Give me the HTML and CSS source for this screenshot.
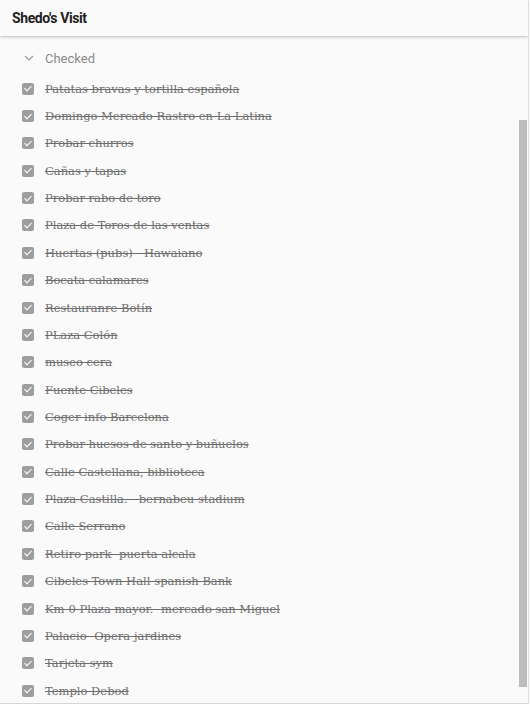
FILE: index.html
```html
<!DOCTYPE html>
<html lang="en">
<head>
    <meta name="viewport" content="width=device-width, initial-scale=1">
    <link rel="stylesheet" href="styles.css">
</head>
<body>

<div class="app">
    <div class="header">
        <h2>Shedo's Visit</h2>
    </div>

    <div class="list-wrap">
        <div class="group-title">
            <svg class="chevron" width="10" height="6" viewBox="0 0 10 6"><path d="M1 1 L5 5 L9 1" fill="none" stroke="#9e9e9e" stroke-width="1.2"/></svg>
            <span>Checked</span>
        </div>

        <ul class="items">
            <li><span class="box"></span>Patatas bravas y tortilla española</li>
            <li><span class="box"></span>Domingo Mercado Rastro en La Latina</li>
            <li><span class="box"></span>Probar churros</li>
            <li><span class="box"></span>Cañas y tapas</li>
            <li><span class="box"></span>Probar rabo de toro</li>
            <li><span class="box"></span>Plaza de Toros de las ventas</li>
            <li><span class="box"></span>Huertas (pubs) - Hawaiano</li>
            <li><span class="box"></span>Bocata calamares</li>
            <li><span class="box"></span>Restauranre Botín</li>
            <li><span class="box"></span>PLaza Colón</li>
            <li><span class="box"></span>museo cera</li>
            <li><span class="box"></span>Fuente Cibeles</li>
            <li><span class="box"></span>Coger info Barcelona</li>
            <li><span class="box"></span>Probar huesos de santo y buñuelos</li>
            <li><span class="box"></span>Calle Castellana, biblioteca</li>
            <li><span class="box"></span>Plaza Castilla. - bernabeu stadium</li>
            <li><span class="box"></span>Calle Serrano</li>
            <li><span class="box"></span>Retiro park -puerta alcala</li>
            <li><span class="box"></span>Cibeles-Town Hall-spanish Bank</li>
            <li><span class="box"></span>Km-0-Plaza mayor. -mercado san Miguel</li>
            <li><span class="box"></span>Palacio -Opera-jardines</li>
            <li><span class="box"></span>Tarjeta sym</li>
            <li><span class="box"></span>Templo Debod</li>
        </ul>

        <!-- scrollbar thumb -->
        <div class="scroll-thumb"></div>
    </div>
</div>

</body>
</html>
```

FILE: styles.css
```css
body {
    margin: 0;
    background-color: #ffffff;
    font-family: 'Roboto', sans-serif;
    color: #333;
}

.app {
    width: 528px;
    height: 703px;
    background-color: #fafafa;
    border-right: 1px solid #dedede;
    border-bottom: 1px solid #d6d6d6;
    box-shadow: 0 2px 2px rgba(0, 0, 0, 0.08);
    display: flex;
    flex-direction: column;
    overflow: hidden;
}

/* Header */
.header {
    height: 36px;
    flex-shrink: 0;
    display: flex;
    align-items: center;
    padding: 0 12px;
    background-color: #fafafa;
    box-shadow: 0 1px 3px rgba(0, 0, 0, 0.25);
    position: relative;
    z-index: 1;
}

.header h2 {
    margin: 0;
    font-size: 14px;
    font-weight: 700;
    letter-spacing: -0.4px;
    color: #222;
}

/* List area */
.list-wrap {
    position: relative;
    flex: 1;
    padding-top: 12px;
}

.group-title {
    display: flex;
    align-items: center;
    height: 20px;
    padding-left: 24px;
    font-size: 13px;
    color: #8a8a8a;
}

.chevron {
    margin-right: 11px;
}

.items {
    list-style-type: none;
    margin: 0;
    padding: 7px 0 0 0;
}

.items li {
    display: flex;
    align-items: center;
    height: 27.36px;
    padding-left: 22px;
    font-family: 'DejaVu Serif', serif;
    font-size: 11.5px;
    color: #6e6e6e;
    text-decoration: line-through;
    white-space: nowrap;
}

/* Checked checkbox */
.box {
    width: 12px;
    height: 12px;
    border-radius: 2px;
    background-color: #9e9e9e;
    margin-right: 11px;
    flex-shrink: 0;
    position: relative;
}

.box::after {
    content: '';
    position: absolute;
    left: 4px;
    top: 1.5px;
    width: 3px;
    height: 6px;
    border: solid #fff;
    border-width: 0 1.5px 1.5px 0;
    transform: rotate(45deg);
}

.scroll-thumb {
    position: absolute;
    right: 1px;
    top: 84px;
    width: 8px;
    height: 567px;
    background-color: #bdbdbd;
}
```
